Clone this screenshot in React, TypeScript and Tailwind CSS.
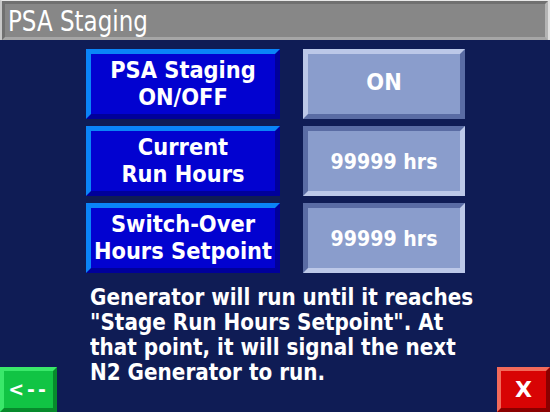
const font = "font-['DejaVu_Sans',sans-serif]";

const leftBtn =
  "flex h-[70px] flex-col items-center justify-center border-[5px] border-t-[#0a84f8] border-l-[#0a84f8] border-b-[#00009a] border-r-[#00009a] bg-[#0202d0] text-center text-[21px] font-bold leading-[27px] text-white";

function LeftButton({ lines }: { lines: string[] }) {
  return (
    <div className={leftBtn}>
      {lines.map((l) => (
        <span key={l} className="inline-block scale-y-[1.08]">
          {l}
        </span>
      ))}
    </div>
  );
}

function ValueBox({ text, raised }: { text: string; raised?: boolean }) {
  return (
    <div
      className={
        "flex h-[70px] items-center justify-center border-[5px] bg-[#8a9dcc] font-bold text-white " +
        (raised
          ? "border-t-[#bcc8e8] border-l-[#bcc8e8] border-b-[#5a6ca4] border-r-[#5a6ca4] text-[21px]"
          : "border-t-[#5a6ca4] border-l-[#5a6ca4] border-b-[#bcc8e8] border-r-[#bcc8e8] text-[19px]")
      }
    >
      <span className="inline-block scale-y-[1.08]">{text}</span>
    </div>
  );
}

export default function App() {
  return (
    <div className={`flex h-[412px] w-[550px] flex-col overflow-hidden bg-[#0f1c55] ${font}`}>
      {/* Title */}
      <div className="h-[40px] border-t border-l-2 border-r-2 border-t-[#e8e8e8] border-l-[#c8c8c8] border-r-[#e0e0e0] bg-[#5e5e5e]">
        <div className="flex h-[39px] items-center border-[3px] border-t-[#707070] border-l-[#707070] border-b-[#a6a6a6] border-r-[#b4b4b4] bg-[#878787] pl-[3px] text-[23px] leading-none text-white">
          <span className="inline-block translate-y-[1px] scale-y-[1.25]">PSA Staging</span>
        </div>
      </div>

      {/* Settings */}
      <div className="ml-[86px] mt-[9px] grid w-[379px] grid-cols-[194px_162px] gap-x-[23px] gap-y-[7px]">
        <LeftButton lines={["PSA Staging", "ON/OFF"]} />
        <ValueBox text="ON" raised />
        <LeftButton lines={["Current", "Run Hours"]} />
        <ValueBox text="99999 hrs" />
        <LeftButton lines={["Switch-Over", "Hours Setpoint"]} />
        <ValueBox text="99999 hrs" />
      </div>

      {/* Footer */}
      <div className="mt-[11px] flex flex-1 items-end">
        <div className="flex h-[45px] w-[57px] items-center justify-center border-[4px] border-t-[#3ae86a] border-l-[#3ae86a] border-b-[#078a2c] border-r-[#078a2c] bg-[#11c444] text-[19px] font-bold tracking-[3px] text-white">
          &lt;--
        </div>
        <p className="ml-[33px] w-[390px] origin-top scale-y-[1.14] self-start text-[20px] font-bold leading-[22px] text-white">
          Generator will run until it reaches "Stage Run Hours Setpoint". At that point, it will signal the next N2 Generator to run.
        </p>
        <div className="ml-auto flex h-[45px] w-[53px] items-center justify-center border-[4px] border-t-[#f26a5a] border-l-[#f26a5a] border-b-[#8a0000] border-r-[#8a0000] bg-[#d80404] text-[22px] font-bold text-white">
          X
        </div>
      </div>
    </div>
  );
}
